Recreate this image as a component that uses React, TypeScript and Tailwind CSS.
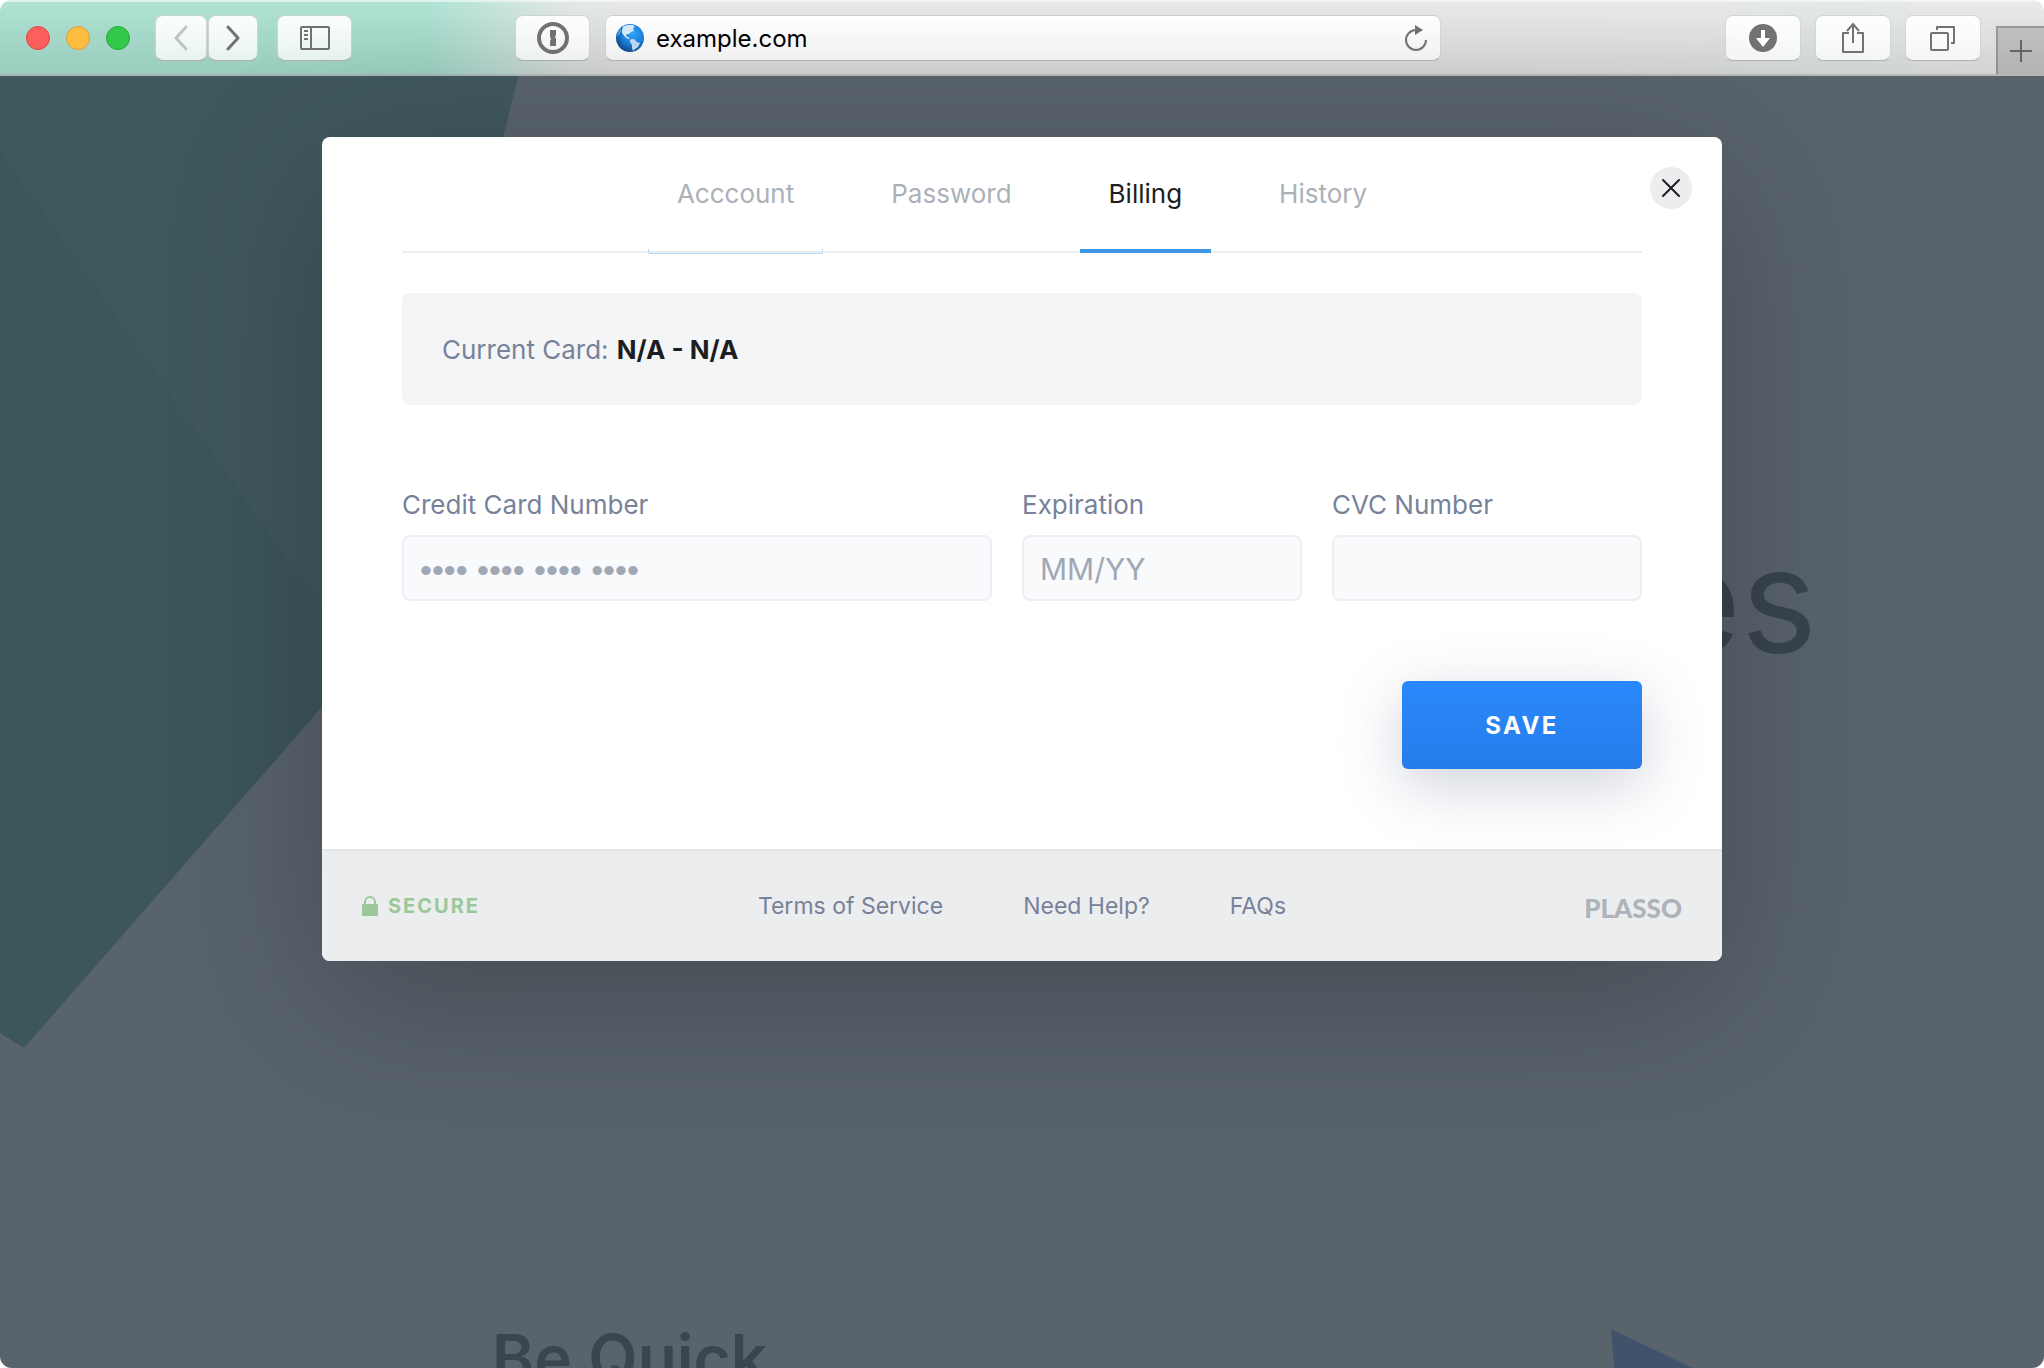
import React from "react";
import clsx from "clsx";

interface ToolbarButtonProps {
  label: string;
  className?: string;
  children: React.ReactNode;
}

const ToolbarButton = ({ label, className, children }: ToolbarButtonProps) => (
  <button
    type="button"
    aria-label={label}
    className={clsx(
      "flex h-[46px] shrink-0 items-center justify-center rounded-lg border border-black/15 border-b-black/30 bg-linear-to-b from-white/95 to-white/75 text-[#727272]",
      className,
    )}
  >
    {children}
  </button>
);

const Globe = () => (
  <svg width="28" height="28" viewBox="0 0 28 28" aria-hidden="true">
    <defs>
      <radialGradient id="globe" cx="0.6" cy="0.35" r="0.7">
        <stop offset="0" stopColor="#2ea5fa" />
        <stop offset="0.55" stopColor="#1c7fd9" />
        <stop offset="1" stopColor="#0c4482" />
      </radialGradient>
    </defs>
    <circle cx="14" cy="14" r="14" fill="url(#globe)" />
    <path
      d="M7 2.500 L11 1 L17 1 L19 3 L17 4 L18 7 L15 8 L13 10 L11 10 L10 12 L12 13 L14 15 L12 15 L9 13 L6 9 L6 6 Z"
      fill="#d3e8f8"
    />
    <path d="M14 15.500 L18 15 L21 18 L24 19 L22 23 L19 25 L17 27 L16 24 L16 21 L14 18 Z" fill="#bcd9f1" />
    <path d="M2 7 L5 4 L5 8 L2 12 L1 11 Z" fill="#4c9be0" />
  </svg>
);

const BrowserToolbar = () => (
  <header className="relative flex h-[76px] shrink-0 items-start border-b-2 border-black/25 bg-[linear-gradient(to_bottom,rgba(255,255,255,0.6)_0,rgba(255,255,255,0.6)_2px,rgba(255,255,255,0.1)_2px,rgba(0,0,0,0.09)_100%),linear-gradient(to_right,#a8e0d0_0,#a8e0d0_21%,#c0e2d9_24%,#e0e5e4_28%,#e8e6e8_32%,#e8e6e8_80%,#e0e8e6_90%,#e8e7e9_96%)] pt-[15px] pl-[26px]">
    <div className="flex h-[46px] items-center gap-4">
      <button type="button" aria-label="Close window" className="size-6 rounded-full border border-[#e0443f] bg-[#fd605c]" />
      <button type="button" aria-label="Minimize window" className="size-6 rounded-full border border-[#dea034] bg-[#fdbd40]" />
      <button type="button" aria-label="Zoom window" className="size-6 rounded-full border border-[#27a836] bg-[#34c84a]" />
    </div>

    <div className="ml-[25px] flex gap-px">
      <ToolbarButton label="Back" className="w-[52px]">
        <svg width="14" height="26" viewBox="0 0 14 26" fill="none" stroke="#c1c4c3" strokeWidth="3" strokeLinecap="round" strokeLinejoin="round">
          <path d="M12 2 L2 13 L12 24" />
        </svg>
      </ToolbarButton>
      <ToolbarButton label="Forward" className="w-[50px]">
        <svg width="14" height="26" viewBox="0 0 14 26" fill="none" stroke="currentColor" strokeWidth="3" strokeLinecap="round" strokeLinejoin="round">
          <path d="M2 2 L12 13 L2 24" />
        </svg>
      </ToolbarButton>
    </div>
    <ToolbarButton label="Show sidebar" className="ml-[19px] w-[75px]">
      <svg width="30" height="24" viewBox="0 0 30 24" fill="none" stroke="currentColor" strokeWidth="2">
        <rect x="1" y="1" width="28" height="22" rx="1" />
        <path d="M11 1 V23 M4 5 H8 M4 9 H8 M4 13 H8" />
      </svg>
    </ToolbarButton>

    <ToolbarButton label="Passwords" className="ml-[163px] w-[75px]">
      <svg width="32" height="32" viewBox="0 0 32 32" fill="none">
        <circle cx="16" cy="16" r="14" stroke="currentColor" strokeWidth="4" />
        <path d="M13 8 H19 V13 L18 15 L19 17 V24 H13 V19 L14 17 L13 15 Z" fill="currentColor" />
      </svg>
    </ToolbarButton>
    <div className="ml-[15px] flex h-[46px] flex-1 items-center rounded-lg border border-black/15 border-b-black/30 bg-linear-to-b from-white to-[#f3f3f4] pr-3 pl-[10px]">
      <Globe />
      <input
        type="text"
        aria-label="Address"
        defaultValue="example.com"
        className="ml-3 min-w-0 flex-1 bg-transparent pt-0.5 text-2xl text-black outline-none"
      />
      <button type="button" aria-label="Reload" className="text-[#727272]">
        <svg width="24" height="28" viewBox="0 0 24 28" fill="none">
          <path d="M12 6 A10 10 0 1 0 22 16" stroke="currentColor" strokeWidth="2" />
          <path d="M11 1 L19 6 L11 11 Z" fill="currentColor" />
        </svg>
      </button>
    </div>

    <div className="mr-[15px] ml-[284px] flex gap-[14px]">
      <ToolbarButton label="Downloads" className="w-[76px]">
        <svg width="28" height="28" viewBox="0 0 28 28">
          <circle cx="14" cy="14" r="14" fill="currentColor" />
          <path d="M12 6 H16 V14 H21 L14 23 L7 14 H12 Z" fill="#fff" />
        </svg>
      </ToolbarButton>
      <ToolbarButton label="Share" className="w-[76px]">
        <svg width="24" height="32" viewBox="0 0 24 32" fill="none" stroke="currentColor" strokeWidth="2">
          <path d="M8 11 H2 V30 H22 V11 H16" strokeLinejoin="round" />
          <path d="M12 21 V2 M6 9 L12 2 L18 9" />
        </svg>
      </ToolbarButton>
      <ToolbarButton label="Show all tabs" className="w-[76px]">
        <svg width="26" height="26" viewBox="0 0 26 26" fill="none" stroke="currentColor" strokeWidth="2" strokeLinejoin="round">
          <rect x="1" y="8" width="17" height="17" rx="1" />
          <path d="M7 5 V2 H24 V18 H21" />
        </svg>
      </ToolbarButton>
    </div>
    <button
      type="button"
      aria-label="New tab"
      className="mt-[11px] flex h-12 w-12 shrink-0 items-center justify-center border-t-2 border-l-2 border-black/20 bg-black/15 text-[#656565]"
    >
      <svg width="22" height="22" viewBox="0 0 22 22" stroke="currentColor" strokeWidth="2">
        <path d="M11 0 V22 M0 11 H22" />
      </svg>
    </button>
  </header>
);

const Backdrop = () => (
  <div className="absolute inset-0 overflow-hidden" aria-hidden="true">
    <svg className="absolute inset-0 h-full w-full">
      <path d="M0 0 H518 L503 61 L440 500 L322 631 L24 972 L0 957 Z" fill="#3c565b" />
      <path d="M0 0 H518 L503 61 L440 700 L0 75 Z" fill="#3f585e" />
      <path d="M1611 1253 L1772 1330 L1618 1340 Z" fill="#41526b" />
    </svg>
    <p className="absolute top-[452px] right-[227px] text-[144px] leading-none text-[#39444d]">es</p>
    <p className="absolute top-[1243px] left-[492px] text-[64px] leading-[78px] font-semibold text-[#3b454f]">Be Quick</p>
  </div>
);

const tabs = ["Acccount", "Password", "Billing", "History"];

const Tabs = () => (
  <nav className="relative flex h-[116px] justify-center gap-[39px] px-20">
    <div className="absolute inset-x-20 bottom-0 h-0.5 bg-[#ecedf3]" />
    {tabs.map((tab) => (
      <button
        key={tab}
        type="button"
        className={clsx(
          "relative border-b-4 px-[29px] text-[26px]",
          tab === "Billing" ? "border-[#3d97e6] text-[#1d1e21]" : "border-transparent text-[#abb1b9]",
        )}
      >
        {tab}
        {tab === "Acccount" && (
          <span className="absolute inset-x-0 -bottom-[5px] h-[5px] rounded-b-xs border-x border-b border-[#b9dcf5]" />
        )}
      </button>
    ))}
  </nav>
);

interface FieldProps {
  id: string;
  label: string;
  placeholder?: string;
  className?: string;
  inputClassName?: string;
}

const Field = ({ id, label, placeholder, className, inputClassName }: FieldProps) => (
  <div className={className}>
    <label htmlFor={id} className="mb-[10px] block text-[26px] leading-10 text-[#77829a]">
      {label}
    </label>
    <input
      id={id}
      type="text"
      placeholder={placeholder}
      className={clsx(
        "block h-[66px] w-full rounded-lg border-2 border-[#eeeff4] bg-[#f9fafc] px-4 text-[#1d1e21] placeholder:text-[#a1a8b5] placeholder:opacity-100",
        inputClassName ?? "pt-0.5 text-[30px]",
      )}
    />
  </div>
);

const BillingModal = () => (
  <section
    role="dialog"
    aria-label="Billing"
    className="relative mx-auto mt-[61px] w-full max-w-[1400px] rounded-lg bg-white shadow-[0_40px_160px_rgba(0,0,0,0.24)]"
  >
    <Tabs />
    <button
      type="button"
      aria-label="Close"
      className="absolute top-[30px] right-[30px] flex size-[42px] items-center justify-center rounded-full bg-[#ecedef] text-[#1d1e21]"
    >
      <svg width="20" height="20" viewBox="0 0 20 20" stroke="currentColor" strokeWidth="2" strokeLinecap="round">
        <path d="M2 2 L18 18 M18 2 L2 18" />
      </svg>
    </button>

    <form className="px-20 pt-10 pb-20" onSubmit={(e) => e.preventDefault()}>
      <p className="flex h-28 items-center gap-2 rounded-lg bg-[#f4f5f7] px-10 text-[26px] text-[#77829a]">
        Current Card: <strong className="font-bold text-[#1d1e21]">N/A - N/A</strong>
      </p>
      <div className="mt-20 flex">
        <Field
          id="card"
          label="Credit Card Number"
          placeholder="•••• •••• •••• ••••"
          className="w-1/2 pr-[30px]"
          inputClassName="pt-1 font-[Liberation_Sans,sans-serif] text-[34px]"
        />
        <Field id="expiration" label="Expiration" placeholder="MM/YY" className="w-1/4 pr-[30px]" />
        <Field id="cvc" label="CVC Number" className="w-1/4" />
      </div>
      <div className="mt-20 flex justify-end">
        <button
          type="submit"
          className="h-[88px] w-60 rounded-md bg-linear-to-b from-[#2b88fb] to-[#257dea] pt-0.5 text-2xl font-bold tracking-widest text-white shadow-[0_16px_60px_rgba(60,75,115,0.25)]"
        >
          SAVE
        </button>
      </div>
    </form>

    <footer className="grid h-28 grid-cols-[1fr_auto_1fr] items-center rounded-b-lg border-t-2 border-[#e4e5e6] bg-[#ecedef] px-10">
      <div className="flex items-center gap-[10px] text-xl font-bold tracking-widest text-[#9bc898]">
        <svg width="16" height="20" viewBox="0 0 16 20" fill="none">
          <path d="M3 9 V6 A5 5 0 0 1 13 6 V9" stroke="currentColor" strokeWidth="2" />
          <rect y="8" width="16" height="12" fill="currentColor" />
        </svg>
        SECURE
      </div>
      <div className="flex gap-20 text-[23px] text-[#77829a]">
        <a href="#terms">Terms of Service</a>
        <a href="#help">Need Help?</a>
        <a href="#faqs">FAQs</a>
      </div>
      <div className="pt-1 text-right font-[Lato,sans-serif] text-[26px] font-black text-[#adb3ba]">PLASSO</div>
    </footer>
  </section>
);

export default function App() {
  return (
    <div className="min-h-screen bg-white font-[Inter,sans-serif]">
      <div className="flex min-h-screen flex-col overflow-hidden rounded-xl bg-[#e8e6e8]">
        <BrowserToolbar />
        <main className="relative flex-1 bg-[#59636c]">
          <Backdrop />
          <BillingModal />
        </main>
      </div>
    </div>
  );
}
